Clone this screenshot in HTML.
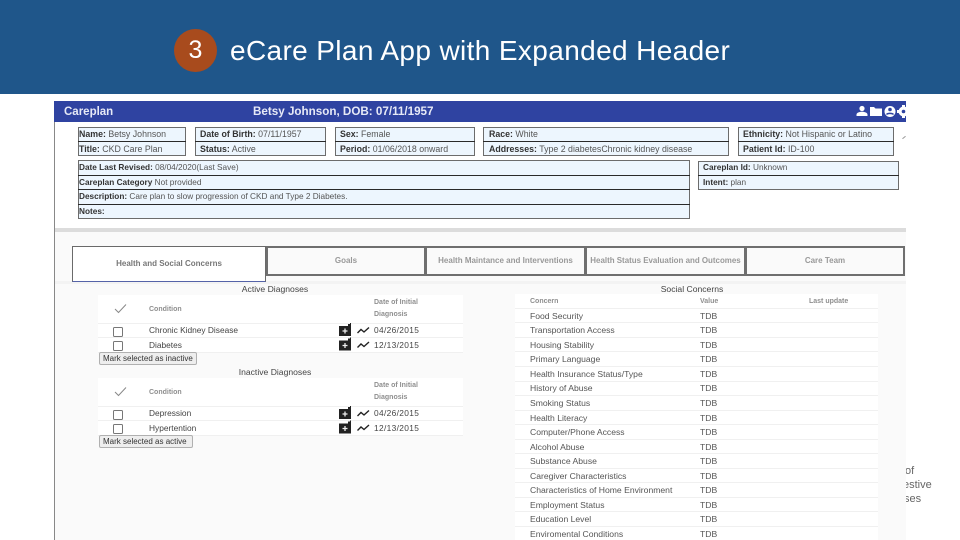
<!DOCTYPE html>
<html><head><meta charset="utf-8"><style>
html,body{margin:0;padding:0;background:#fff}
#p{position:relative;width:960px;height:540px;overflow:hidden;background:#fff;font-family:"Liberation Sans",sans-serif}
#p div{position:absolute;box-sizing:border-box;white-space:nowrap}
.b{background:#edf6fe;border:1px solid #6c6c6c}
.l{height:1px;background:#2a2a2a}
.t{font-size:8.8px;line-height:12px;color:#555}
.t b{color:#333;font-weight:bold}
.u{font-size:8.25px}
.tab{top:246px;height:30px;border:2px solid #6f6f6f;background:#fafafa;color:#999;font-size:8px;line-height:26px;text-align:center;font-weight:bold}
.h{font-size:7px;line-height:12px;color:#8f8f8f;font-weight:bold}
.r{font-size:8.6px;line-height:12px;color:#555}
.d{font-size:8.35px;line-height:12px;color:#444}
.g{font-size:8.6px;line-height:12px;color:#444}
.s{height:1px;background:#f0f0f0}
.cb{width:10px;height:10px;border:1px solid #777;border-radius:1.5px;background:#fff;left:113px}
.btn{left:99px;height:13px;background:#eee;border:1px solid #b0b0b0;border-radius:2px;font-size:8px;line-height:11px;color:#333;padding-left:3px}
</style></head><body><div id="p">
<div style="left:0;top:0;width:960px;height:94px;background:#1f568a"></div>
<div style="left:174px;top:29px;width:43px;height:43px;border-radius:50%;background:#a84b1d"></div>
<div style="left:174px;top:29px;width:43px;height:43px;text-align:center;font-size:25px;line-height:42px;color:#fff">3</div>
<div style="left:230px;top:33px;font-size:28px;line-height:36px;color:#fff;letter-spacing:0.37px">eCare Plan App with Expanded Header</div>

<div style="left:54px;top:101px;width:852px;height:439px;background:#fff;border-left:1px solid #888"></div>
<div style="left:54px;top:101px;width:852px;height:21px;background:#2f43a1"></div>
<div style="left:64px;top:105px;font-size:11.5px;line-height:15px;font-weight:bold;color:#e6e9f6">Careplan</div>
<div style="left:253px;top:104px;font-size:11.65px;line-height:15px;font-weight:bold;color:#e6e9f6">Betsy Johnson, DOB: 07/11/1957</div>
<svg style="position:absolute;left:855px;top:104px" width="51" height="15" viewBox="0 0 51 15">
<g fill="#fff"><circle cx="7" cy="4.500" r="2.600"/><path d="M1.500 12v-1.500c0-1.800 3.500-2.700 5.500-2.700s5.500 .9 5.500 2.700V12z"/>
<path d="M15 3h4l1.500 1.500H27v7.500H15z"/>
<circle cx="35" cy="7.500" r="5.500"/><circle cx="48.500" cy="7.500" r="5"/><path d="M47 1h3v13h-3zM42 6h13v3H42z"/></g>
<circle cx="35" cy="5.500" r="1.800" fill="#2f43a1"/><path d="M31.500 10.500c1-1.500 6-1.500 7 0" stroke="#2f43a1" stroke-width="1.500" fill="none"/><circle cx="48.500" cy="7.500" r="1.800" fill="#2f43a1"/></svg>

<div class="b" style="left:78px;top:127px;width:108px;height:29px"></div>
<div class="b" style="left:195px;top:127px;width:131px;height:29px"></div>
<div class="b" style="left:335px;top:127px;width:140px;height:29px"></div>
<div class="b" style="left:483px;top:127px;width:246px;height:29px"></div>
<div class="b" style="left:738px;top:127px;width:156px;height:29px"></div>
<div class="l" style="left:78px;top:141px;width:108px"></div>
<div class="l" style="left:195px;top:141px;width:131px"></div>
<div class="l" style="left:335px;top:141px;width:140px"></div>
<div class="l" style="left:483px;top:141px;width:246px"></div>
<div class="l" style="left:738px;top:141px;width:156px"></div>
<div class="t" style="left:79px;top:128px"><b>Name:</b> Betsy Johnson</div>
<div class="t" style="left:79px;top:143px"><b>Title:</b> CKD Care Plan</div>
<div class="t" style="left:200px;top:128px"><b>Date of Birth:</b> 07/11/1957</div>
<div class="t" style="left:200px;top:143px"><b>Status:</b> Active</div>
<div class="t" style="left:340px;top:128px"><b>Sex:</b> Female</div>
<div class="t" style="left:340px;top:143px"><b>Period:</b> 01/06/2018 onward</div>
<div class="t" style="left:489px;top:128px"><b>Race:</b> White</div>
<div class="t" style="left:489px;top:143px"><b>Addresses:</b> Type 2 diabetesChronic kidney disease</div>
<div class="t" style="left:743px;top:128px"><b>Ethnicity:</b> Not Hispanic or Latino</div>
<div class="t" style="left:743px;top:143px"><b>Patient Id:</b> ID-100</div>
<div style="left:902px;top:137px;width:4px;height:1px;background:#999;transform:rotate(-40deg)"></div>

<div class="b" style="left:78px;top:160px;width:612px;height:59px"></div>
<div class="l" style="left:78px;top:175px;width:612px"></div>
<div class="l" style="left:78px;top:189px;width:612px"></div>
<div class="l" style="left:78px;top:204px;width:612px"></div>
<div class="t u" style="left:79px;top:162px"><b>Date Last Revised:</b> 08/04/2020(Last Save)</div>
<div class="t u" style="left:79px;top:177px"><b>Careplan Category</b> Not provided</div>
<div class="t u" style="left:79px;top:191px"><b>Description:</b> Care plan to slow progression of CKD and Type 2 Diabetes.</div>
<div class="t u" style="left:79px;top:206px"><b>Notes:</b></div>

<div class="b" style="left:698px;top:161px;width:201px;height:29px"></div>
<div class="l" style="left:698px;top:175px;width:201px"></div>
<div class="t u" style="left:703px;top:162px"><b>Careplan Id:</b> Unknown</div>
<div class="t u" style="left:703px;top:177px"><b>Intent:</b> plan</div>

<div style="left:55px;top:228px;width:851px;height:312px;background:#fafafa"></div>
<div style="left:55px;top:228px;width:851px;height:4px;background:#dcdcdc"></div>
<div style="left:55px;top:281px;width:851px;height:3px;background:#f3f3f3"></div>

<div style="left:72px;top:246px;width:194px;height:36px;border:1px solid #6a6a6a;border-bottom:1px solid #5563a8;background:#fff;color:#777;font-size:8px;line-height:34px;text-align:center;font-weight:bold">Health and Social Concerns</div>
<div class="tab" style="left:266px;width:160px">Goals</div>
<div class="tab" style="left:425px;width:161px">Health Maintance and Interventions</div>
<div class="tab" style="left:585px;width:161px;font-size:7.95px">Health Status Evaluation and Outcomes</div>
<div class="tab" style="left:745px;width:160px">Care Team</div>

<div class="g" style="left:98px;width:354px;top:283px;text-align:center">Active Diagnoses</div>
<div style="left:98px;top:295px;width:365px;height:57px;background:#fff"></div>
<div class="s" style="left:98px;top:323px;width:365px"></div>
<div class="s" style="left:98px;top:337px;width:365px"></div>
<div class="s" style="left:98px;top:352px;width:365px"></div>
<svg style="position:absolute;left:114px;top:303px" width="13" height="11"><path d="M1 6l3.500 3.500L12 1.500" stroke="#888" fill="none"/></svg>
<div class="h" style="left:149px;top:304px">Condition</div>
<div class="h" style="left:374px;top:297px">Date of Initial</div>
<div class="h" style="left:374px;top:309px">Diagnosis</div>
<div class="cb" style="top:327px"></div>
<div class="cb" style="top:341px"></div>
<div class="d" style="left:149px;top:324px">Chronic Kidney Disease</div>
<div class="d" style="left:149px;top:339px">Diabetes</div>
<div class="d" style="left:374px;top:324px;letter-spacing:.35px">04/26/2015</div>
<div class="d" style="left:374px;top:339px;letter-spacing:.35px">12/13/2015</div>
<div class="btn" style="top:352px;width:98px">Mark selected as inactive</div>

<div class="g" style="left:98px;width:354px;top:366px;text-align:center">Inactive Diagnoses</div>
<div style="left:98px;top:378px;width:365px;height:57px;background:#fff"></div>
<div class="s" style="left:98px;top:406px;width:365px"></div>
<div class="s" style="left:98px;top:420px;width:365px"></div>
<div class="s" style="left:98px;top:435px;width:365px"></div>
<svg style="position:absolute;left:114px;top:386px" width="13" height="11"><path d="M1 6l3.500 3.500L12 1.500" stroke="#888" fill="none"/></svg>
<div class="h" style="left:149px;top:387px">Condition</div>
<div class="h" style="left:374px;top:380px">Date of Initial</div>
<div class="h" style="left:374px;top:392px">Diagnosis</div>
<div class="cb" style="top:410px"></div>
<div class="cb" style="top:424px"></div>
<div class="d" style="left:149px;top:407px">Depression</div>
<div class="d" style="left:149px;top:422px">Hypertention</div>
<div class="d" style="left:374px;top:407px;letter-spacing:.35px">04/26/2015</div>
<div class="d" style="left:374px;top:422px;letter-spacing:.35px">12/13/2015</div>
<div class="btn" style="top:435px;width:94px">Mark selected as active</div>

<svg style="position:absolute;left:339px;top:323px" width="32" height="112" viewBox="0 0 32 112">
<g><path d="M0 3h9V1h2V0h1v13H0z" fill="#222"/><path d="M6 5.500v5M3.500 8h5" stroke="#eee" stroke-width="1.300"/><path d="M18.500 10l3.500-3.500 3 2.500 5-4.500" stroke="#222" stroke-width="1.400" fill="none"/></g>
<g transform="translate(0,14.500)"><path d="M0 3h9V1h2V0h1v13H0z" fill="#222"/><path d="M6 5.500v5M3.500 8h5" stroke="#eee" stroke-width="1.300"/><path d="M18.500 10l3.500-3.500 3 2.500 5-4.500" stroke="#222" stroke-width="1.400" fill="none"/></g>
<g transform="translate(0,83)"><path d="M0 3h9V1h2V0h1v13H0z" fill="#222"/><path d="M6 5.500v5M3.500 8h5" stroke="#eee" stroke-width="1.300"/><path d="M18.500 10l3.500-3.500 3 2.500 5-4.500" stroke="#222" stroke-width="1.400" fill="none"/></g>
<g transform="translate(0,97.500)"><path d="M0 3h9V1h2V0h1v13H0z" fill="#222"/><path d="M6 5.500v5M3.500 8h5" stroke="#eee" stroke-width="1.300"/><path d="M18.500 10l3.500-3.500 3 2.500 5-4.500" stroke="#222" stroke-width="1.400" fill="none"/></g>
</svg>

<div class="g" style="left:515px;width:354px;top:283px;text-align:center">Social Concerns</div>
<div style="left:515px;top:294px;width:363px;height:246px;background:#fff"></div>
<div class="h" style="left:530px;top:296px">Concern</div>
<div class="h" style="left:700px;top:296px">Value</div>
<div class="h" style="left:809px;top:296px">Last update</div>
<div class="s" style="left:515px;top:308px;width:363px"></div>
<div class="s" style="left:515px;top:322px;width:363px"></div>
<div class="s" style="left:515px;top:337px;width:363px"></div>
<div class="s" style="left:515px;top:351px;width:363px"></div>
<div class="s" style="left:515px;top:366px;width:363px"></div>
<div class="s" style="left:515px;top:381px;width:363px"></div>
<div class="s" style="left:515px;top:395px;width:363px"></div>
<div class="s" style="left:515px;top:410px;width:363px"></div>
<div class="s" style="left:515px;top:424px;width:363px"></div>
<div class="s" style="left:515px;top:439px;width:363px"></div>
<div class="s" style="left:515px;top:453px;width:363px"></div>
<div class="s" style="left:515px;top:468px;width:363px"></div>
<div class="s" style="left:515px;top:482px;width:363px"></div>
<div class="s" style="left:515px;top:497px;width:363px"></div>
<div class="s" style="left:515px;top:511px;width:363px"></div>
<div class="s" style="left:515px;top:526px;width:363px"></div>
<div class="r" style="left:530px;top:310px">Food Security</div><div class="r" style="left:700px;top:310px">TDB</div>
<div class="r" style="left:530px;top:324px">Transportation Access</div><div class="r" style="left:700px;top:324px">TDB</div>
<div class="r" style="left:530px;top:339px">Housing Stability</div><div class="r" style="left:700px;top:339px">TDB</div>
<div class="r" style="left:530px;top:353px">Primary Language</div><div class="r" style="left:700px;top:353px">TDB</div>
<div class="r" style="left:530px;top:368px">Health Insurance Status/Type</div><div class="r" style="left:700px;top:368px">TDB</div>
<div class="r" style="left:530px;top:382px">History of Abuse</div><div class="r" style="left:700px;top:382px">TDB</div>
<div class="r" style="left:530px;top:397px">Smoking Status</div><div class="r" style="left:700px;top:397px">TDB</div>
<div class="r" style="left:530px;top:412px">Health Literacy</div><div class="r" style="left:700px;top:412px">TDB</div>
<div class="r" style="left:530px;top:426px">Computer/Phone Access</div><div class="r" style="left:700px;top:426px">TDB</div>
<div class="r" style="left:530px;top:441px">Alcohol Abuse</div><div class="r" style="left:700px;top:441px">TDB</div>
<div class="r" style="left:530px;top:455px">Substance Abuse</div><div class="r" style="left:700px;top:455px">TDB</div>
<div class="r" style="left:530px;top:470px">Caregiver Characteristics</div><div class="r" style="left:700px;top:470px">TDB</div>
<div class="r" style="left:530px;top:484px">Characteristics of Home Environment</div><div class="r" style="left:700px;top:484px">TDB</div>
<div class="r" style="left:530px;top:499px">Employment Status</div><div class="r" style="left:700px;top:499px">TDB</div>
<div class="r" style="left:530px;top:513px">Education Level</div><div class="r" style="left:700px;top:513px">TDB</div>
<div class="r" style="left:530px;top:528px">Enviromental Conditions</div><div class="r" style="left:700px;top:528px">TDB</div>

<div style="left:906px;top:464px;width:30px;height:44px;overflow:hidden;font-size:11px;color:#666">
<div style="left:-1px;top:1px;line-height:12px">of</div>
<div style="left:-3px;top:15px;line-height:12px">estive</div>
<div style="left:-2px;top:29px;line-height:12px">ses</div>
</div>
</div></body></html>
